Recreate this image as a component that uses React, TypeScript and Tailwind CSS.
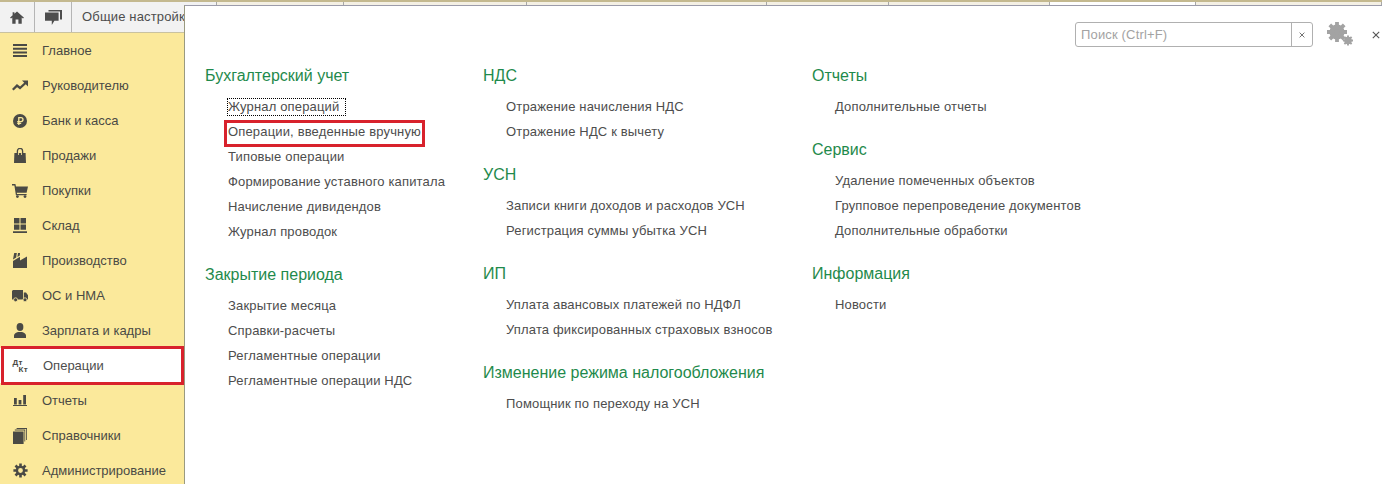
import type { ReactNode } from "react";

const sans = "font-['Liberation_Sans',Arial,sans-serif]";
const ink = "#4a4a45";

const Home = () => (
  <svg viewBox="0 0 16 14" className="h-[13px] w-[14px] fill-[#4d4d4d]">
    <path d="M8 0 16 7.2 14.8 8.2 13.4 7V14H9.6V9.4H6.4V14H2.6V7L1.2 8.2 0 7.2 3 4.5V1H5V2.7Z" />
  </svg>
);

const Chat = () => (
  <svg viewBox="0 0 17 15" className="h-[15px] w-[17px] fill-[#4d4d4d]">
    <path d="M3.5 0H17V9.6H15V1.6H3.5Z" />
    <path d="M0 2.6H13.6V10.8H9.4L6.8 15V10.8H0Z" />
  </svg>
);

const Cross = ({ size, color }: { size: string; color: string }) => (
  <svg viewBox="0 0 8 8" className={size}>
    <path d="M.8 .8 7.2 7.2M7.2 .8 .8 7.2" fill="none" stroke={color} strokeWidth="1.1" />
  </svg>
);

// panel settings gears: eight teeth as crossing bars under a ring
const Gear = ({ cx, cy, r }: { cx: number; cy: number; r: number }) => {
  const d = r * 0.72;
  return (
    <g fill="none" stroke="#a3a3a3">
      <path
        d={`M${cx} ${cy - r}V${cy + r}M${cx - r} ${cy}H${cx + r}M${cx - d} ${cy - d}L${cx + d} ${cy + d}M${cx + d} ${cy - d}L${cx - d} ${cy + d}`}
        strokeWidth={r * 0.38}
      />
      <circle cx={cx} cy={cy} r={r * 0.52} strokeWidth={r * 0.48} />
    </g>
  );
};

const menu: { label: string; icon: ReactNode }[] = [
  {
    label: "Главное",
    icon: (
      <svg viewBox="0 0 14 13" className="h-[13px] w-[14px] fill-[#4a4a45]">
        <path d="M0 0H14V2H0ZM0 3.7H14V5.7H0ZM0 7.4H14V9.4H0ZM0 11H14V13H0Z" />
      </svg>
    ),
  },
  {
    label: "Руководителю",
    icon: (
      <svg viewBox="0 0 16 11" className="h-[11px] w-[16px]">
        <path d="M.8 9.8 5 5.6 8 8 13.5 3" fill="none" stroke={ink} strokeWidth="2.3" />
        <path d="M10 .4H16V6.4Z" fill={ink} />
      </svg>
    ),
  },
  {
    label: "Банк и касса",
    icon: (
      <svg viewBox="0 0 14 14" className="h-[14px] w-[14px]">
        <circle cx="7" cy="7" r="7" fill={ink} />
        <path d="M5.8 11V3.6H8A2 2 0 0 1 8 7.6H4.2M4.2 9.3H8.2" fill="none" stroke="#fbe99b" strokeWidth="1.3" />
      </svg>
    ),
  },
  {
    label: "Продажи",
    icon: (
      <svg viewBox="0 0 12 15" className="h-[15px] w-[12px]">
        <path d="M.4 5H11.6L12 15H0Z" fill={ink} />
        <path d="M3.4 8V3A2.6 2.6 0 0 1 8.6 3V8" fill="none" stroke={ink} strokeWidth="1.3" />
        <path d="M4.1 5H4.9V7H4.1ZM7.1 5H7.9V7H7.1Z" fill="#fbe99b" />
      </svg>
    ),
  },
  {
    label: "Покупки",
    icon: (
      <svg viewBox="0 0 16 14" className="h-[14px] w-[16px] fill-[#4a4a45]">
        <path d="M0 0H3.4L4 2.4H16L14.6 8.8H4.8L5 10H14.6V11.2H3.9L2.4 1.4H0Z" />
        <circle cx="5.4" cy="12.6" r="1.4" />
        <circle cx="13" cy="12.6" r="1.4" />
      </svg>
    ),
  },
  {
    label: "Склад",
    icon: (
      <svg viewBox="0 0 14 15" className="h-[15px] w-[14px] fill-[#4a4a45]">
        <path d="M1 0H6.5V5.4H1ZM7.5 0H13V5.4H7.5ZM1 6.4H6.5V11.8H1ZM7.5 6.4H13V11.8H7.5ZM0 13.2H14V15H0Z" />
      </svg>
    ),
  },
  {
    label: "Производство",
    icon: (
      <svg viewBox="0 0 14 15" className="h-[15px] w-[14px] fill-[#4a4a45]">
        <path d="M1.2 0H3.8L3.2 4.4 0 6.4Z" />
        <path d="M5 0H7L6.8 2.6 4.4 4Z" />
        <path d="M0 15V8L7 3.8V7.6L14 3.4V15Z" />
      </svg>
    ),
  },
  {
    label: "ОС и НМА",
    icon: (
      <svg viewBox="0 0 16 12" className="h-[12px] w-[16px] fill-[#4a4a45]">
        <path d="M1 0H11V9.6H0V1ZM11.8 2.4H14L16 5.2V9.6H11.8Z" />
        <circle cx="3.6" cy="9.8" r="2" stroke="#fbe99b" strokeWidth=".8" />
        <circle cx="13" cy="9.8" r="2" stroke="#fbe99b" strokeWidth=".8" />
      </svg>
    ),
  },
  {
    label: "Зарплата и кадры",
    icon: (
      <svg viewBox="0 0 12 15" className="h-[15px] w-[12px] fill-[#4a4a45]">
        <ellipse cx="6" cy="4" rx="3.4" ry="4" />
        <path d="M0 15V12.4C0 10.4 2.2 9.8 4 9H8C9.8 9.8 12 10.4 12 12.4V15Z" />
      </svg>
    ),
  },
  {
    label: "Операции",
    icon: (
      <span className="flex w-[15px] flex-col text-[8px] leading-[7px] font-bold tracking-[0.3px] text-[#4a4a45]">
        <span>Дт</span>
        <span className="pl-[6px]">Кт</span>
      </span>
    ),
  },
  {
    label: "Отчеты",
    icon: (
      <svg viewBox="0 0 14 11" className="h-[11px] w-[14px] fill-[#4a4a45]">
        <path d="M1 3H3.8V9.6H1ZM5.6 5H8.4V9.6H5.6ZM10.2 0H13V9.6H10.2ZM0 10H14V11H0Z" />
      </svg>
    ),
  },
  {
    label: "Справочники",
    icon: (
      <svg viewBox="0 0 14 16" className="h-[16px] w-[14px] fill-[#4a4a45]">
        <path d="M0 3.4H10.6V16H0ZM1.8 1.6H12.2V13.6H11.4V2.5H1.8ZM3.6 0H14V12H13.2V.9H3.6Z" />
      </svg>
    ),
  },
  {
    label: "Администрирование",
    icon: (
      <svg viewBox="0 0 15 15" className="h-[15px] w-[15px]">
        <path d="M7.5 .4V14.6M.4 7.5H14.6M2.5 2.5 12.5 12.5M12.5 2.5 2.5 12.5" stroke={ink} strokeWidth="2.6" />
        <circle cx="7.5" cy="7.5" r="3.6" fill="#fbe99b" stroke={ink} strokeWidth="2.4" />
      </svg>
    ),
  },
];

const columns: { width: string; sections: { title: string; items: string[] }[] }[] = [
  {
    width: "w-[278px]",
    sections: [
      {
        title: "Бухгалтерский учет",
        items: [
          "Журнал операций",
          "Операции, введенные вручную",
          "Типовые операции",
          "Формирование уставного капитала",
          "Начисление дивидендов",
          "Журнал проводок",
        ],
      },
      {
        title: "Закрытие периода",
        items: ["Закрытие месяца", "Справки-расчеты", "Регламентные операции", "Регламентные операции НДС"],
      },
    ],
  },
  {
    width: "w-[329px]",
    sections: [
      { title: "НДС", items: ["Отражение начисления НДС", "Отражение НДС к вычету"] },
      { title: "УСН", items: ["Записи книги доходов и расходов УСН", "Регистрация суммы убытка УСН"] },
      { title: "ИП", items: ["Уплата авансовых платежей по НДФЛ", "Уплата фиксированных страховых взносов"] },
      { title: "Изменение режима налогообложения", items: ["Помощник по переходу на УСН"] },
    ],
  },
  {
    width: "w-[330px]",
    sections: [
      { title: "Отчеты", items: ["Дополнительные отчеты"] },
      {
        title: "Сервис",
        items: ["Удаление помеченных объектов", "Групповое перепроведение документов", "Дополнительные обработки"],
      },
      { title: "Информация", items: ["Новости"] },
    ],
  },
];

// tabs hidden behind the panel, only the top few pixels show
const tabs = [
  { w: "w-[145px]", bg: "bg-[#f2f2f2]", label: "Общие настройки" },
  { w: "w-[127px]", bg: "bg-[#f4f0e4]" },
  { w: "w-[183px]", bg: "bg-[#f4f0e4]" },
  { w: "w-[240px]", bg: "bg-[#f4f0e4]" },
  { w: "w-[122px]", bg: "bg-[#f4f0e4]" },
  { w: "w-[161px]", bg: "bg-[#f4f0e4]" },
  { w: "w-[146px]", bg: "bg-white" },
  { w: "flex-1", bg: "bg-[#f4f0e4]" },
];

function Item({ text }: { text: string }) {
  const focused = text === "Журнал операций";
  const marked = text === "Операции, введенные вручную";
  return (
    <div className="flex h-[25px] items-center pl-[22px]">
      <span
        className={
          marked
            ? "relative px-px text-[13px] leading-[19px] tracking-[0.16px] text-[#4d4d4d] after:absolute after:top-[-2px] after:right-[-3px] after:bottom-[-6px] after:left-[-3px] after:border-[3px] after:border-[#d8222c]"
            : focused
              ? "border border-dotted border-black pr-[6px] text-[13px] leading-[16px] tracking-[0.16px] text-[#4d4d4d]"
              : "px-px text-[13px] tracking-[0.16px] text-[#4d4d4d]"
        }
      >
        {text}
      </span>
    </div>
  );
}

export default function App() {
  return (
    <div className={`${sans} relative flex h-[484px] w-[1382px] flex-col overflow-hidden bg-white`}>
      <div className="flex h-[33px] shrink-0 border-t-2 border-b border-t-[#c4b98f] border-b-[#c9c2a0] bg-[#f2f2f2]">
        <div className="flex w-[35px] items-center justify-center border-r border-[#b5b5b5]">
          <Home />
        </div>
        <div className="flex w-[37px] items-center justify-center border-r border-[#b5b5b5]">
          <Chat />
        </div>
        {tabs.map((t, i) => (
          <div
            key={i}
            className={`${t.w} ${t.bg} border-r border-[#a8a8a8] pt-[5px] pl-[10px] text-[13px] tracking-[0.16px] whitespace-nowrap text-[#4d4d4d]`}
          >
            {t.label}
          </div>
        ))}
      </div>
      <nav className="w-[184px] flex-1 bg-[#fbe99b]">
        {menu.map((m) =>
          m.label === "Операции" ? (
            <div
              key={m.label}
              className="relative flex h-[35px] items-center bg-white text-[13px] text-[#4d4d4d] after:absolute after:top-[-2px] after:right-0 after:bottom-[-2px] after:left-px after:border-[3px] after:border-[#d8222c]"
            >
              <span className="flex w-[43px] shrink-0 justify-center pt-px pr-[4px] pl-[1px]">{m.icon}</span>
              {m.label}
            </div>
          ) : (
            <div key={m.label} className="flex h-[35px] items-center text-[13px] text-[#4a4a45]">
              <span className="flex w-[42px] shrink-0 justify-center pr-[2px]">{m.icon}</span>
              {m.label}
            </div>
          ),
        )}
      </nav>

      {/* section panel opened over the tabs */}
      <div className="absolute top-[5px] right-0 bottom-0 left-[184px] flex flex-col border-t border-l border-t-[#9c9cab] border-l-[#9a9a80] bg-white">
        <div className="flex h-[57px] shrink-0 items-start justify-end pt-[16px]">
          <div className="flex h-[25px] w-[238px] rounded-[3px] border border-[#b0b0b0]">
            <div className="flex-1 pl-[5px] text-[13px] leading-[23px] tracking-[0.16px] text-[#a3a3a3]">Поиск (Ctrl+F)</div>
            <div className="flex w-[21px] items-center justify-center border-l border-[#b0b0b0]">
              <Cross size="h-[6px] w-[6px]" color="#555" />
            </div>
          </div>
          <svg viewBox="0 0 28 26" className="mt-[-1px] ml-[13px] h-[26px] w-[28px]">
            <Gear cx={11} cy={11} r={10} />
            <Gear cx={22} cy={19.5} r={5} />
          </svg>
          <div className="flex h-[25px] w-[28px] items-center justify-end pr-[2px]">
            <Cross size="h-[8px] w-[8px]" color="#555" />
          </div>
        </div>
        <main className="flex flex-1 pl-[20px]">
          {columns.map((c) => (
            <div key={c.sections[0].title} className={`${c.width} flex flex-col gap-[18px]`}>
              {c.sections.map((s) => (
                <section key={s.title}>
                  <h2 className="mb-[6px] flex h-[25px] items-center text-[16px] whitespace-nowrap text-[#1f8a4c]">
                    {s.title}
                  </h2>
                  {s.items.map((i) => (
                    <Item key={i} text={i} />
                  ))}
                </section>
              ))}
            </div>
          ))}
        </main>
      </div>
    </div>
  );
}
